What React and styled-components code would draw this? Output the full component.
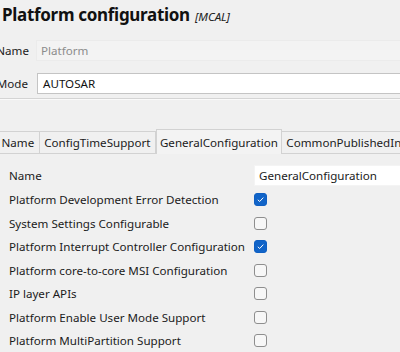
import React from "react";
import styled, { createGlobalStyle } from "styled-components";

const Global = createGlobalStyle`
  html, body { margin: 0; padding: 0; }
  body {
    background: #f0f0f0;
    font-family: "Noto Sans", "Open Sans", sans-serif;
    color: #1b1b1b;
    overflow: hidden;
  }
  #root { width: 400px; height: 352px; overflow: hidden; }
`;

const Page = styled.div`
  width: 400px;
  height: 352px;
  overflow: hidden;
  display: flex;
  flex-direction: column;
`;

const TitleRow = styled.div`
  display: flex;
  align-items: baseline;
  gap: 5px;
  padding: 0 0 0 2px;
  height: 30px;
  line-height: 30px;
`;

const Title = styled.h1`
  margin: 0;
  font-size: 17px;
  letter-spacing: -0.3px;
  font-weight: 700;
  color: #111;
`;

const Tag = styled.span`
  font-size: 11.5px;
  font-style: italic;
  color: #222;
`;

const Form = styled.div`
  display: grid;
  grid-template-columns: 37px 1fr;
  row-gap: 12px;
  margin: 10px 0 0 -8px;
  align-items: center;
`;

const Label = styled.span`
  font-size: 11.6px;
  white-space: nowrap;
  text-align: right;
  padding-right: ${(p) => p.$pad || 0}px;
`;

const Field = styled.div`
  height: 21px;
  box-sizing: border-box;
  margin-left: ${(p) => p.$indent}px;
  border: 1px solid ${(p) => (p.$disabled ? "#ebebeb" : "#c4c4c4")};
  background: ${(p) => (p.$disabled ? "#f3f3f3" : "#ffffff")};
  color: ${(p) => (p.$disabled ? "#8c8c8c" : "#111")};
  font-size: 11.6px;
  line-height: 19px;
  padding-left: ${(p) => p.$textPad}px;
  margin-right: -10px;
  white-space: nowrap;
`;

const Separator = styled.div`
  margin-top: 4px;
  height: 1px;
  border-top: 1px solid #d4d4d4;
  border-bottom: 1px solid #fafafa;
`;

const TabStrip = styled.div`
  display: flex;
  align-items: flex-end;
  margin: 29px 0 0 -4px;
  height: 25px;
`;

const Tab = styled.div`
  flex: none;
  box-sizing: border-box;
  height: ${(p) => (p.$active ? 25 : 23)}px;
  padding: ${(p) => (p.$active ? "2px 3px 0" : "0 4.5px")};
  font-size: 11.6px;
  line-height: 21px;
  white-space: nowrap;
  border: 1px solid #d2d2d2;
  border-left: ${(p) => (p.$first || p.$active ? "1px solid #d2d2d2" : "none")};
  border-bottom: ${(p) => (p.$active ? "none" : "1px solid #d2d2d2")};
  background: ${(p) => (p.$active ? "#f3f3f3" : "#f0f0f0")};
`;

const Content = styled.div`
  display: flex;
  flex-direction: column;
  padding: 8px 0 0 9px;
`;

const Row = styled.div`
  display: grid;
  grid-template-columns: 245px 1fr;
  align-items: center;
  height: ${(p) => p.$h || 23.5}px;
  font-size: 11.6px;
  white-space: nowrap;
`;

const ValueField = styled.div`
  height: 21px;
  background: #fff;
  border: 1px solid #f4f4f4;
  box-sizing: border-box;
  padding-left: 4px;
  line-height: 19px;
  margin-right: -10px;
`;

const Box = styled.span`
  width: 13px;
  height: 13px;
  box-sizing: border-box;
  border-radius: 3px;
  border: 1px solid ${(p) => (p.$checked ? "#0f5fc2" : "#8e8e8e")};
  background: ${(p) => (p.$checked ? "#1164c8" : "#f7f7f7")};
  display: flex;
  align-items: center;
  justify-content: center;
`;

function Check({ checked }) {
  return (
    <Box $checked={checked}>
      {checked && (
        <svg width="9" height="9" viewBox="0 0 9 9">
          <path d="M1.8 4.8 L3.7 6.5 L7.3 2.6" fill="none" stroke="#fff" strokeWidth="1" />
        </svg>
      )}
    </Box>
  );
}

const options = [
  ["Platform Development Error Detection", true],
  ["System Settings Configurable", false],
  ["Platform Interrupt Controller Configuration", true],
  ["Platform core-to-core MSI Configuration", false],
  ["IP layer APIs", false],
  ["Platform Enable User Mode Support", false],
  ["Platform MultiPartition Support", false],
];

export default function App() {
  return (
    <Page>
      <Global />
      <TitleRow>
        <Title>Platform configuration</Title>
        <Tag>[MCAL]</Tag>
      </TitleRow>
      <Form>
        <Label>Name</Label>
        <Field $disabled $indent={7} $textPad={4}>Platform</Field>
        <Label $pad={1}>Mode</Label>
        <Field $indent={8} $textPad={5}>AUTOSAR</Field>
      </Form>
      <Separator />
      <TabStrip>
        <Tab $first>Name</Tab>
        <Tab>ConfigTimeSupport</Tab>
        <Tab $active>GeneralConfiguration</Tab>
        <Tab>CommonPublishedInformation</Tab>
      </TabStrip>
      <Content>
        <Row $h={26}>
          <span>Name</span>
          <ValueField>GeneralConfiguration</ValueField>
        </Row>
        {options.map(([label, checked]) => (
          <Row key={label}>
            <span>{label}</span>
            <Check checked={checked} />
          </Row>
        ))}
      </Content>
    </Page>
  );
}
